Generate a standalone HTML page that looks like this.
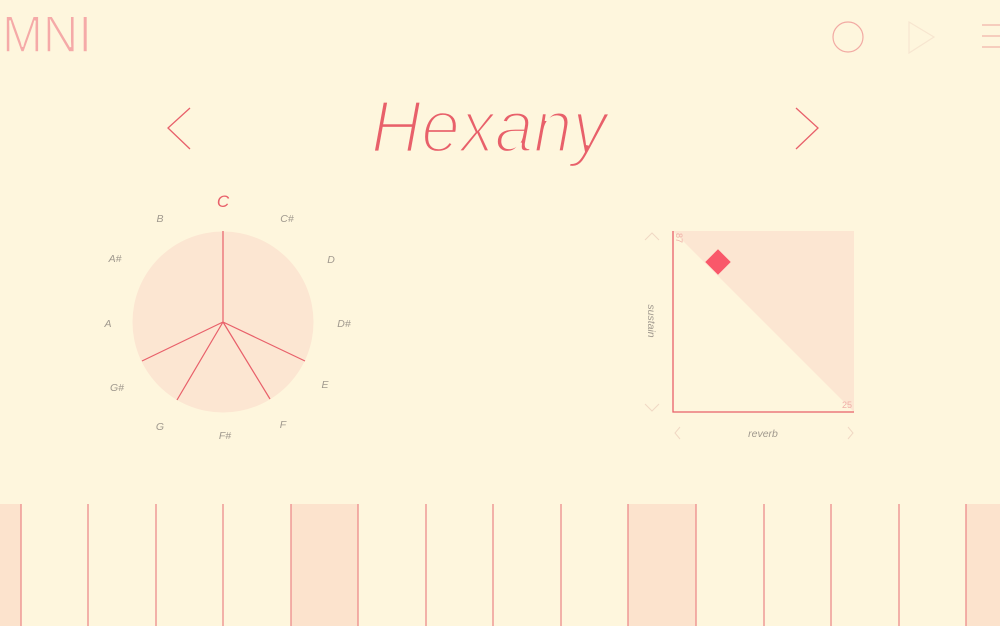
<!DOCTYPE html>
<html><head><meta charset="utf-8"><style>
html,body{margin:0;padding:0;background:#fef6dd;width:1000px;height:626px;overflow:hidden}
svg{display:block}
</style></head><body>
<svg width="1000" height="626" viewBox="0 0 1000 626" xmlns="http://www.w3.org/2000/svg" font-family="Liberation Sans, sans-serif">
<rect width="1000" height="626" fill="#fef6dd"/>
<text x="2" y="52" font-size="52" fill="#f5aaa8" stroke="#fef6dd" stroke-width="1.6" textLength="90" lengthAdjust="spacingAndGlyphs">MNI</text>
<circle cx="848" cy="37" r="15" fill="none" stroke="#f2aaa3" stroke-width="1.2"/>
<path d="M909 22 L934 37 L909 53 Z" fill="none" stroke="#f7e6d0" stroke-width="1.2"/>
<path d="M982 25H1000M982 36H1000M982 47H1000" stroke="#f2b5aa" stroke-width="1.2"/>
<path d="M190 108 L168 128 L190 149" fill="none" stroke="#e8606a" stroke-width="1.3"/>
<path d="M796 108 L818 128 L796 149" fill="none" stroke="#e8606a" stroke-width="1.3"/>
<text x="489" y="152" font-size="74" font-style="italic" fill="#e8606a" stroke="#fef6dd" stroke-width="3.2" text-anchor="middle" textLength="236" lengthAdjust="spacingAndGlyphs">Hexany</text>
<circle cx="223" cy="322" r="90.5" fill="#fce6d2"/>
<path d="M223 231 L223 322 M223 322 L142 361 M223 322 L177 400 M223 322 L270 399 M223 322 L305 361" stroke="#e8606a" stroke-width="1.2" fill="none"/>
<g font-size="10.5" font-style="italic" fill="#a0998e" text-anchor="middle">
<text x="223" y="207" font-size="17" fill="#e8606a">C</text>
<text x="287" y="222">C#</text>
<text x="331" y="263">D</text>
<text x="344" y="327">D#</text>
<text x="325" y="388">E</text>
<text x="283" y="428">F</text>
<text x="225" y="439">F#</text>
<text x="160" y="430">G</text>
<text x="117" y="391">G#</text>
<text x="108" y="327">A</text>
<text x="115" y="262">A#</text>
<text x="160" y="222">B</text>
</g>
<path d="M673 231 L854 231 L854 412 Z" fill="#fce6d2"/>
<path d="M673 231 V412 H854" fill="none" stroke="#e8606a" stroke-width="1.3"/>
<rect x="709" y="253" width="18" height="18" fill="#f9586a" transform="rotate(45 718 262)"/>
<g fill="none" stroke="#f0d8c4" stroke-width="1">
<path d="M645 240 L652 233 L659 240"/>
<path d="M645 404 L652 411 L659 404"/>
<path d="M680 427 L675 433 L680 439"/>
<path d="M848 427 L853 433 L848 439"/>
</g>
<text x="763" y="437" font-size="10.5" font-style="italic" fill="#a0998e" text-anchor="middle">reverb</text>
<text transform="translate(648 321) rotate(90)" font-size="10.5" font-style="italic" fill="#a0998e" text-anchor="middle">sustain</text>
<text transform="translate(676 238) rotate(90)" font-size="9" fill="#f0b0a8" text-anchor="middle">87</text>
<text x="847" y="408" font-size="9" fill="#f0b0a8" text-anchor="middle">25</text>
<g fill="#fce3cd">
<rect x="0" y="504" width="21" height="122"/>
<rect x="291" y="504" width="67" height="122"/>
<rect x="628" y="504" width="68" height="122"/>
<rect x="966" y="504" width="34" height="122"/>
</g>
<g stroke="#ec8c8c" stroke-width="1.3">
<path d="M21 504V626M88 504V626M156 504V626M223 504V626M291 504V626M358 504V626M426 504V626M493 504V626M561 504V626M628 504V626M696 504V626M764 504V626M831 504V626M899 504V626M966 504V626"/>
</g>
</svg>
</body></html>
